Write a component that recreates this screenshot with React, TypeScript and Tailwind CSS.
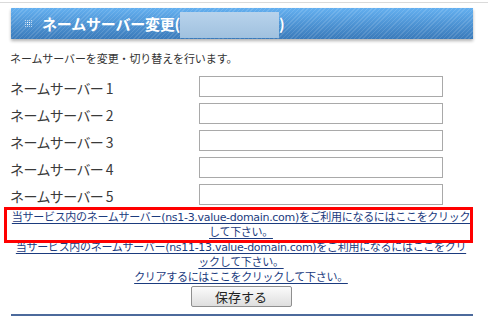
import React from "react";

function DotIcon() {
  const dots: React.ReactElement[] = [];
  for (let r = 0; r < 4; r++) {
    for (let c = 0; c < 4; c++) {
      const edge = r === 0 || r === 3 || c === 0 || c === 3;
      dots.push(
        <rect key={`${r}-${c}`} x={c * 2} y={r * 2} width={1} height={1} fill="#ffffff" opacity={edge ? 0.6 : 0.95} />
      );
    }
  }
  return (
    <svg width="8" height="8" viewBox="0 0 8 8" className="shrink-0">
      {dots}
    </svg>
  );
}

export default function App() {
  const rows = [1, 2, 3, 4, 5];
  return (
    <div className="w-[488px] h-[317px] bg-white overflow-hidden pt-[2px] font-['Noto_Sans_CJK_JP',sans-serif] text-[#333]">
      <div className="h-px bg-[#dadada]" />
      <div className="ml-[11px] mt-[5px] w-[462px] h-[31px] flex items-center shadow-[0_2px_3px_rgba(0,0,0,0.3)] [background:repeating-linear-gradient(135deg,rgba(255,255,255,0.12)_0_1px,transparent_1px_3px),linear-gradient(to_bottom,#64b0f0,#3a7aba)]">
        <div className="ml-[14px] mr-[9px] flex items-center">
          <DotIcon />
        </div>
        <span className="text-white font-bold text-[15px] leading-[31px] tracking-[-0.2px] whitespace-nowrap">ネームサーバー変更(</span>
        <div className="self-end mb-px w-[99px] h-[26px] bg-gradient-to-b from-[#b8d3ec] to-[#a0c1df]" />
        <span className="text-white font-bold text-[15px] leading-[31px]">)</span>
      </div>

      <div className="pl-[10px] w-[472px]">
        <p className="mt-[12px] text-[11px] leading-[14px] tracking-[-0.1px] text-[#333]">ネームサーバーを変更・切り替えを行います。</p>

        <div className="mt-[11px] flex flex-col gap-[6px]">
          {rows.map((n) => (
            <div key={n} className="flex items-center h-[21px]">
              <span className="w-[189px] text-[14px] leading-[21px] tracking-[-0.6px] text-[#3a3a3a] pt-[3px]">ネームサーバー {n}</span>
              <div className="w-[244px] h-[21px] border border-[#a9a9a9] bg-white" />
            </div>
          ))}
        </div>

        <div className="mt-[5px] text-center text-[11px] leading-[15px] font-['DejaVu_Sans','Noto_Sans_CJK_JP',sans-serif] text-[#1b3b7e]">
          <div className="relative">
            <span className="underline underline-offset-[2px] tracking-[-0.3px]">
              当サービス内のネームサーバー(ns1-3.value-domain.com)をご利用になるにはここをクリック
              <br />
              して下さい。
            </span>
            <div className="absolute -top-[3px] -bottom-[3px] -left-[6px] -right-px border-[3px] border-[#ff0000] pointer-events-none" />
          </div>
          <div>
            <span className="underline underline-offset-[2px] tracking-[-0.3px]">
              当サービス内のネームサーバー(ns11-13.value-domain.com)をご利用になるにはここをクリ
              <br />
              ックして下さい。
            </span>
          </div>
          <div>
            <span className="underline underline-offset-[2px] tracking-[-0.3px]">クリアするにはここをクリックして下さい。</span>
          </div>
        </div>

        <div className="mt-px flex justify-center">
          <button className="w-[101px] h-[21px] border border-[#8f8f8f] rounded-[2px] bg-gradient-to-b from-[#fbfbfb] to-[#dedede] text-[13px] leading-[19px] text-[#222] font-['Noto_Sans_CJK_JP',sans-serif]">
            保存する
          </button>
        </div>
      </div>

      <div className="ml-[11px] mt-[7px] w-[462px] h-[2px] bg-[#4c6a9c]" />
    </div>
  );
}
